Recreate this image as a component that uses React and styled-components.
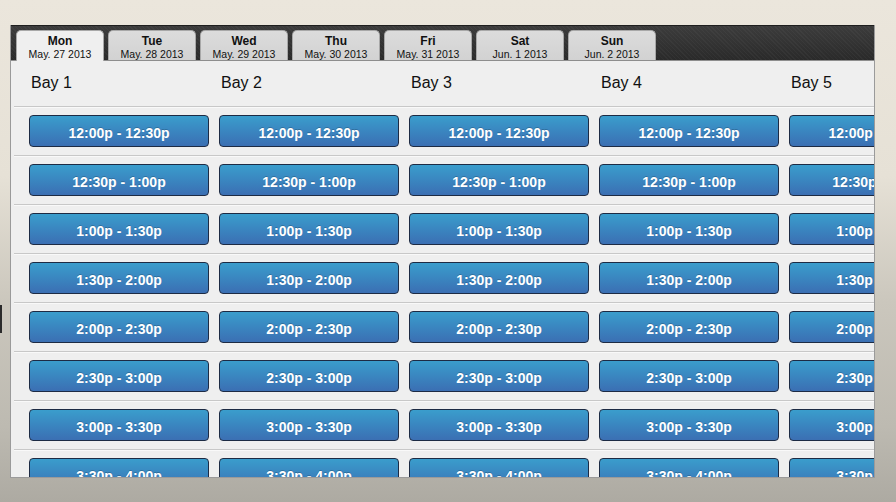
import styled, { createGlobalStyle } from 'styled-components';

const GlobalStyle = createGlobalStyle`
  html, body {
    margin: 0;
    padding: 0;
  }
  body {
    font-family: "Liberation Sans", Arial, sans-serif;
    background:
      linear-gradient(#2b2b2b, #2b2b2b) 0 305px / 2px 28px no-repeat,
      linear-gradient(180deg, #ebe6dc 0%, #e6e1d6 35%, #cbc7bd 60%, #bdbab1 85%, #adaaa2 100%);
    min-height: 502px;
    overflow: hidden;
  }
`;

const days = [
  { day: 'Mon', date: 'May. 27 2013' },
  { day: 'Tue', date: 'May. 28 2013' },
  { day: 'Wed', date: 'May. 29 2013' },
  { day: 'Thu', date: 'May. 30 2013' },
  { day: 'Fri', date: 'May. 31 2013' },
  { day: 'Sat', date: 'Jun. 1 2013' },
  { day: 'Sun', date: 'Jun. 2 2013' },
];

const bays = ['Bay 1', 'Bay 2', 'Bay 3', 'Bay 4', 'Bay 5'];

const slots = [
  '12:00p - 12:30p',
  '12:30p - 1:00p',
  '1:00p - 1:30p',
  '1:30p - 2:00p',
  '2:00p - 2:30p',
  '2:30p - 3:00p',
  '3:00p - 3:30p',
  '3:30p - 4:00p',
];

const Page = styled.div`
  padding: 25px 0 0 10px;
  height: 502px;
  box-sizing: border-box;
`;

const Panel = styled.div`
  width: 865px;
  height: 453px;
  box-sizing: border-box;
  border: 1px solid #9a9a9a;
  border-top: none;
  overflow: hidden;
  background: #efefef;
  display: flex;
  flex-direction: column;
`;

const TabBar = styled.div`
  height: 36px;
  flex-shrink: 0;
  box-sizing: border-box;
  padding: 5px 0 0 6px;
  display: flex;
  gap: 4px;
  align-items: flex-end;
  background:
    repeating-linear-gradient(45deg, rgba(255,255,255,0.03) 0 1px, transparent 1px 3px),
    linear-gradient(180deg, #3c3c3c 0%, #2a2a2a 100%);
  border-top: 1px solid #1e1e1e;
  border-bottom: 1px solid #8e8e8e;
  margin: 0 -1px;
`;

const Tab = styled.div`
  width: 88px;
  height: ${p => (p.$active ? '31px' : '30px')};
  margin-bottom: ${p => (p.$active ? '-1px' : '0')};
  box-sizing: border-box;
  border: 1px solid #a8a8a8;
  border-bottom: none;
  border-radius: 5px 5px 0 0;
  background: ${p => (p.$active ? '#efefef' : 'linear-gradient(180deg, #dcdcdc, #d2d2d2)')};
  display: flex;
  flex-direction: column;
  align-items: center;
  padding-top: 3px;
  color: #111;
`;

const TabDay = styled.span`
  font-size: 12px;
  font-weight: bold;
  line-height: 14px;
`;

const TabDate = styled.span`
  font-size: 10.5px;
  line-height: 13px;
`;

const Header = styled.div`
  height: 45px;
  flex-shrink: 0;
  display: flex;
  align-items: center;
  padding: 0 0 0 20px;
`;

const BayLabel = styled.div`
  width: 190px;
  flex-shrink: 0;
  font-size: 16px;
  color: #111;
  padding-bottom: 1px;
`;

const Row = styled.div`
  margin-left: 3px;
  border-top: 1px solid #c8c8c8;
  box-shadow: inset 0 1px 0 #f9f9f9;
  padding: 8px 0 8px 15px;
  display: flex;
  gap: 10px;
  flex-shrink: 0;
`;

const SlotButton = styled.button`
  width: 180px;
  height: 32px;
  flex-shrink: 0;
  box-sizing: border-box;
  border: 1px solid #1d2b44;
  border-radius: 4px;
  background: linear-gradient(180deg, #3a9dcc 0%, #3a86c0 50%, #3b6fb3 100%);
  color: #fff;
  font-family: "Liberation Sans", Arial, sans-serif;
  font-size: 14px;
  font-weight: bold;
  text-shadow: 0 -1px 0 rgba(0, 0, 0, 0.2);
  padding: 3px 0 0;
  cursor: pointer;
`;

export default function App() {
  return (
    <>
      <GlobalStyle />
      <Page>
        <Panel>
          <TabBar>
            {days.map((d, i) => (
              <Tab key={d.day} $active={i === 0}>
                <TabDay>{d.day}</TabDay>
                <TabDate>{d.date}</TabDate>
              </Tab>
            ))}
          </TabBar>
          <Header>
            {bays.map(b => (
              <BayLabel key={b}>{b}</BayLabel>
            ))}
          </Header>
          {slots.map(s => (
            <Row key={s}>
              {bays.map(b => (
                <SlotButton key={b}>{s}</SlotButton>
              ))}
            </Row>
          ))}
        </Panel>
      </Page>
    </>
  );
}
